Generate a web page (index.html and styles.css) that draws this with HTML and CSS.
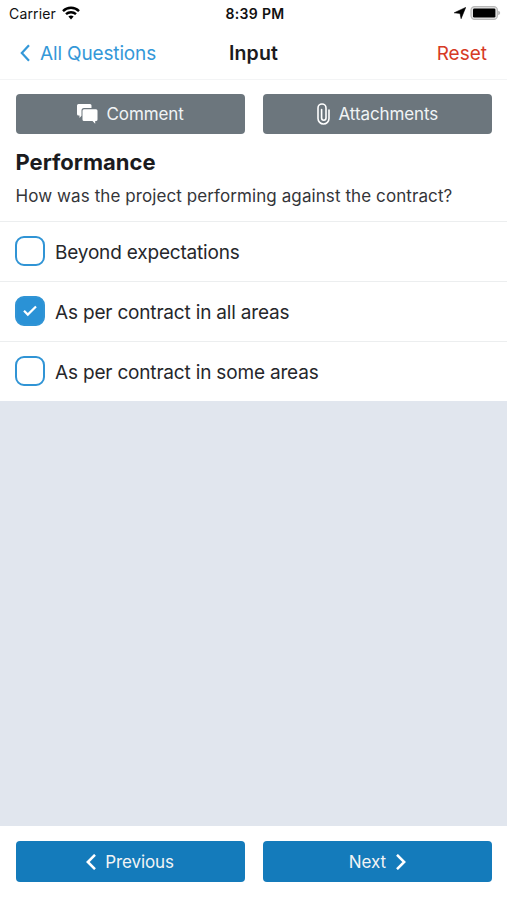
FILE: index.html
```html
<!DOCTYPE html>
<html lang="en">
<head>
<meta charset="utf-8">
<title>Input</title>
<link rel="stylesheet" href="styles.css">
</head>
<body>
<div class="app">
  <div class="status">
    <div class="carrier"><span class="carrier-name">Carrier</span>
      <svg class="wifi" width="18" height="14" viewBox="0 0 18 14" fill="none" stroke="#000" stroke-width="2.4"><path d="M1 5.100C5.400.7 12.600.7 17 5.100"/><path d="M4 8.200c2.800-2.700 7.200-2.700 10 0"/><path d="M6.400 10.600Q9 8.300 11.600 10.600L9 13.500Z" fill="#000" stroke="none"/></svg>
    </div>
    <span class="time">8:39 PM</span>
    <div class="indicators">
      <svg width="12" height="12" viewBox="0 0 12 12"><path d="M11.700.4 7.100 11.700 6 6.400 .2 5.800Z" fill="#000" stroke="#000" stroke-width=".6" stroke-linejoin="round"/></svg>
      <svg width="31" height="14" viewBox="0 0 31 14"><rect x="1" y=".6" width="26.400" height="12.800" rx="3.600" fill="#e4e4e4" stroke="#b8b8b8" stroke-width="1.200"/><rect x="3" y="2.400" width="22.400" height="9.200" rx="1.400" fill="#000"/><path d="M28.200 4.800q2 .6 2 2.200t-2 2.200Z" fill="#b4b4b4"/></svg>
    </div>
  </div>
  <header class="nav">
    <a class="back"><svg width="10" height="18" viewBox="0 0 10 18" fill="none" stroke="currentColor" stroke-width="2.200"><path d="M9 1.200 1.800 9 9 16.800"/></svg><span>All Questions</span></a>
    <h1 class="title">Input</h1>
    <a class="reset">Reset</a>
  </header>
  <main class="main">
    <section class="question">
      <div class="actions">
        <button class="btn gray"><svg class="chat" width="21" height="20" viewBox="0 0 21 20" fill="#fff"><path d="M1.500 0H13a1.500 1.500 0 0 1 1.500 1.500V4H7A2.500 2.500 0 0 0 4.500 6.500V11.800L2.500 14V11.500h-1A1.500 1.500 0 0 1 0 10V1.500A1.500 1.500 0 0 1 1.500 0Z"/><path d="M7 5.200H19a1.500 1.500 0 0 1 1.500 1.500V15.500A1.500 1.500 0 0 1 19 17h-.8v2.700L15.500 17H7a1.500 1.500 0 0 1-1.500-1.500V6.700A1.500 1.500 0 0 1 7 5.200Z"/></svg><span class="comment">Comment</span></button>
        <button class="btn gray"><svg class="clip" width="13" height="22" viewBox="0 0 13 22" fill="none" stroke="#fff" stroke-width="1.600" stroke-linecap="round"><path d="M12 7V15.500a5.500 5.500 0 0 1-11 0V5a4 4 0 0 1 8 0V15a2.200 2.200 0 0 1-4.400 0V6.500" /></svg><span class="attach">Attachments</span></button>
      </div>
      <h2 class="heading">Performance</h2>
      <p class="prompt">How was the project performing against the contract?</p>
    </section>
    <ul class="options">
      <li class="option"><i class="box"></i><span>Beyond expectations</span></li>
      <li class="option"><i class="box checked"><svg width="14" height="12" viewBox="0 0 14 12" fill="none" stroke="#fff" stroke-width="2.200"><path d="M1 5.800 4.800 9.600 13 1.500"/></svg></i><span>As per contract in all areas</span></li>
      <li class="option"><i class="box"></i><span>As per contract in some areas</span></li>
    </ul>
  </main>
  <footer class="footer">
    <button class="btn blue prev"><svg width="10" height="16" viewBox="0 0 10 16" fill="none" stroke="#fff" stroke-width="2.500"><path d="M9 .8 1.800 8 9 15.200"/></svg><span>Previous</span></button>
    <button class="btn blue next"><span>Next</span><svg width="10" height="16" viewBox="0 0 10 16" fill="none" stroke="#fff" stroke-width="2.500"><path d="M1 .8 8.200 8 1 15.200"/></svg></button>
  </footer>
</div>
</body>
</html>
```
FILE: styles.css
```css
* { box-sizing: border-box; margin: 0; padding: 0; }
body { font-family: Inter, sans-serif; color: #26272b; background: #fff; }
svg { display: block; flex: none; }
.app { width: 507px; height: 900px; display: flex; flex-direction: column; overflow: hidden; }
.status { height: 27px; display: grid; grid-template-columns: 1fr auto 1fr; align-items: center; padding: 0 6px 0 9px; color: #111; }
.carrier { display: flex; align-items: center; gap: 6px; font-size: 14px; letter-spacing: .15px; }
.wifi { margin-top: -2px; }
.time { font-size: 14px; font-weight: 600; letter-spacing: .35px; }
.indicators { display: flex; justify-content: flex-end; align-items: center; gap: 4px; }
.indicators svg { margin-top: -1px; }
.nav { height: 53px; display: grid; grid-template-columns: 1fr auto 1fr; align-items: center; padding: 0 20px; border-bottom: 1px solid #f3f4f5; }
.back { display: flex; align-items: center; gap: 10px; color: #3498d8; font-size: 19px; letter-spacing: -.15px; }
.title { font-size: 19.5px; font-weight: 600; color: #1b1b1d; letter-spacing: .1px; }
.reset { justify-self: end; color: #d63a25; font-size: 19px; }
.main { flex: 1; background: #e1e6ee; }
.question { height: 141px; padding: 14px 15px 0 15.5px; background: #fff; }
.actions { display: flex; gap: 18px; }
.btn { flex: 1; height: 40px; border: 0; border-radius: 4px; display: flex; align-items: center; justify-content: center; font: 400 17px Inter, sans-serif; letter-spacing: -.1px; color: #f1f4f5; }
.gray { background: #6c767d; }
.blue { background: #147bbb; height: 41px; }
.chat { margin-right: 9px; }
.clip { margin-right: 9px; }
.heading { margin-top: 14px; font-size: 22px; line-height: 28px; font-weight: 700; color: #1b1b1e; }
.prompt { margin-top: 9px; font-size: 17px; line-height: 22px; letter-spacing: .09px; white-space: nowrap; color: #343539; }
.options { list-style: none; }
.option { height: 60px; display: flex; align-items: center; gap: 10px; padding: 0 15px; background: #fff; border-top: 1px solid #eceeef; font-size: 19px; letter-spacing: -.18px; }
.option span { padding-top: 1px; }
.box { width: 30px; height: 30px; margin-top: -1px; border: 2.5px solid #3094d5; border-radius: 9px; display: flex; align-items: center; justify-content: center; }
.checked { background: #2a92d6; }
.footer { height: 74px; display: flex; gap: 18px; padding: 15px 15px 0 15.5px; background: #fff; }
.prev { gap: 9px; }
.next { gap: 10px; }
```
